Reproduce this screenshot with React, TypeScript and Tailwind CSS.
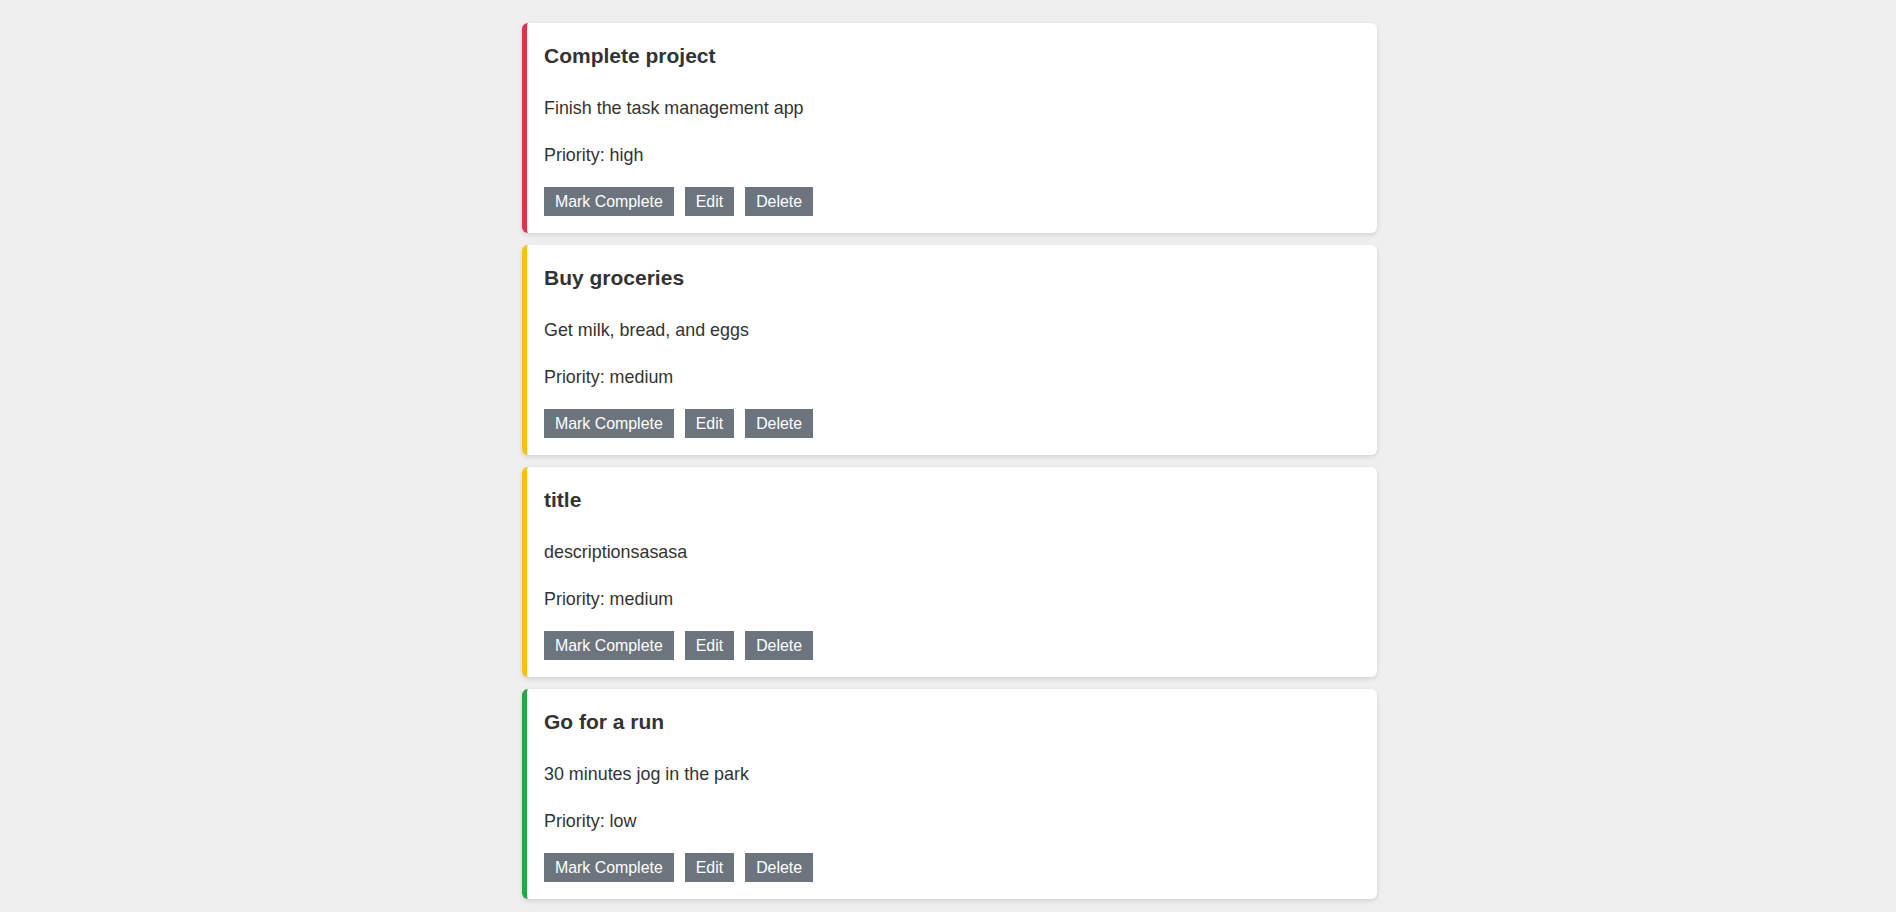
import React from "react";

type Task = { title: string; description: string; priority: "high" | "medium" | "low" };

const tasks: Task[] = [
  { title: "Complete project", description: "Finish the task management app", priority: "high" },
  { title: "Buy groceries", description: "Get milk, bread, and eggs", priority: "medium" },
  { title: "title", description: "descriptionsasasa", priority: "medium" },
  { title: "Go for a run", description: "30 minutes jog in the park", priority: "low" },
];

const borderClass: Record<Task["priority"], string> = {
  high: "border-l-[#dc3545]",
  medium: "border-l-[#ffc107]",
  low: "border-l-[#28a745]",
};

function TaskCard({ task }: { task: Task }) {
  return (
    <div
      className={`h-[210px] shrink-0 bg-white rounded-[6px] border-l-[5px] border-solid ${borderClass[task.priority]} shadow-[0_2px_5px_rgba(0,0,0,0.12)] pl-[17px] pt-[21px] text-[#333333]`}
    >
      <h3 className="text-[21px] leading-[24px] font-bold m-0">{task.title}</h3>
      <p className="text-[17.9px] leading-[26px] mt-[27px]">{task.description}</p>
      <p className="text-[17.9px] leading-[26px] mt-[21px]">Priority: {task.priority}</p>
      <div className="flex gap-[11px] mt-[19px]">
        <button className="bg-[#6c757d] text-white text-[15.9px] leading-[18px] px-[11px] py-[5.5px] rounded-none">
          Mark Complete
        </button>
        <button className="bg-[#6c757d] text-white text-[15.9px] leading-[18px] px-[11px] py-[5.5px] rounded-none">
          Edit
        </button>
        <button className="bg-[#6c757d] text-white text-[15.9px] leading-[18px] px-[11px] py-[5.5px] rounded-none">
          Delete
        </button>
      </div>
    </div>
  );
}

export default function App() {
  return (
    <div
      className="h-[912px] overflow-hidden bg-[#efefef] flex justify-center pl-[3px]"
      style={{ fontFamily: '"Liberation Sans", Arial, sans-serif' }}
    >
      <div className="w-[855px] pt-[23px] flex flex-col gap-[12px]">
        {tasks.map((t, i) => (
          <TaskCard key={i} task={t} />
        ))}
      </div>
    </div>
  );
}
